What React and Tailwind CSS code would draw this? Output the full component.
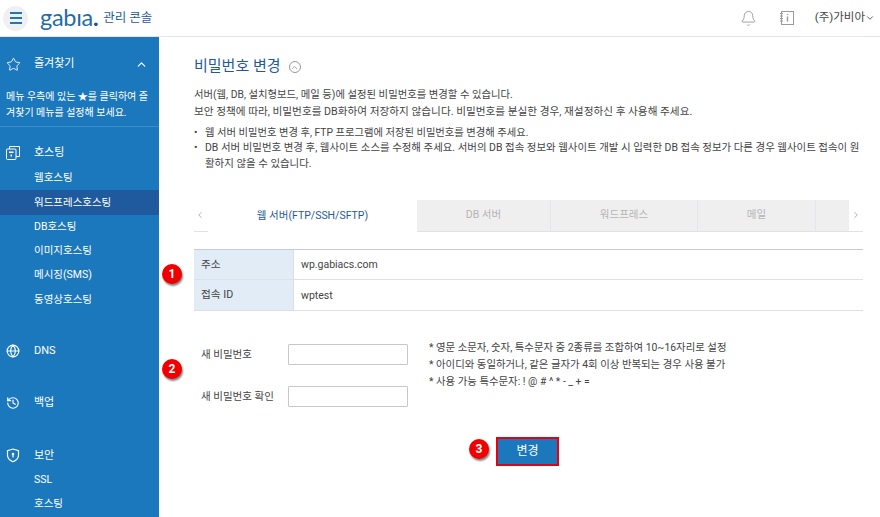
import React from "react";
import { Bell, ChevronDown, ChevronLeft, ChevronRight, ChevronUp, Globe, History, Star } from "lucide-react";

const hostingLinks = ["웹호스팅", "워드프레스호스팅", "DB호스팅", "이미지호스팅", "메시징(SMS)", "동영상호스팅"];

const HostingIcon = () => (
  <svg width="14" height="14" viewBox="0 0 14 14" fill="none" stroke="currentColor" strokeWidth="1">
    <rect x="0.5" y="3" width="9.5" height="10.5" rx="1" />
    <path d="M3.5 3V0.5h10v10H10" />
    <rect x="3" y="5.5" width="4.5" height="1.5" fill="currentColor" stroke="none" />
    <rect x="4.5" y="8.5" width="1.5" height="2" fill="currentColor" stroke="none" />
  </svg>
);

const ShieldIcon = () => (
  <svg width="14" height="15" viewBox="0 0 14 15" fill="none" stroke="currentColor" strokeWidth="1.2">
    <path d="M7 1l5.5 1.6v4.6c0 3-2.4 5.2-5.5 6.6-3.1-1.4-5.5-3.6-5.5-6.6V2.6z" />
    <circle cx="7" cy="6" r="1.3" fill="currentColor" stroke="none" />
    <rect x="6.4" y="6.5" width="1.2" height="3" fill="currentColor" stroke="none" />
  </svg>
);

const NoteIcon = () => (
  <svg width="16" height="16" viewBox="0 0 16 16" fill="none" stroke="#9a9a9a" strokeWidth="1">
    <rect x="2.5" y="1.5" width="12" height="13" />
    <path d="M1 3.5h3M1 6h3M1 8.5h3M1 11h3" />
    <path d="M8.5 4v1M8.5 6.5v5" strokeWidth="1.4" />
  </svg>
);

const Badge = ({ className, children }) => (
  <div
    className={`absolute flex h-[20px] w-[20px] items-center justify-center rounded-full bg-[#f00000] text-[12px] font-bold text-white shadow-[1px_2px_2px_rgba(0,0,0,0.5)] ${className}`}
  >
    {children}
  </div>
);

const Sidebar = () => (
  <aside className="h-full w-[159px] shrink-0 overflow-hidden bg-[#1c78bc] text-[11px] text-white">
    <div className="flex h-[52px] items-center pt-[3px]">
      <Star size={15} strokeWidth={1.4} className="ml-[6px]" />
      <span className="ml-[13px]">즐겨찾기</span>
      <ChevronUp size={13} className="ml-auto mr-[11px]" />
    </div>
    <p className="h-[37px] px-[6px] text-[10px] leading-[16px]">
      메뉴 우측에 있는 ★를 클릭하여 즐겨찾기 메뉴를 설정해 보세요.
    </p>
    <div className="border-t border-[#3d8cc6] pt-[14px]">
      <div className="flex h-[25px] items-center pb-[1px]">
        <span className="ml-[6px] w-[28px]"><HostingIcon /></span>
        <span>호스팅</span>
      </div>
      {hostingLinks.map((link) => (
        <div
          key={link}
          className={`flex h-[24.3px] items-center pl-[34px] text-[10.5px] ${link === "워드프레스호스팅" ? "bg-[#1f5a9f]" : ""}`}
        >
          {link}
        </div>
      ))}
    </div>
    <div className="mt-[27px] flex h-[24px] items-center">
      <Globe size={14} className="ml-[6px] mr-[14px]" />
      <span>DNS</span>
    </div>
    <div className="mt-[28px] flex h-[24px] items-center">
      <History size={14} className="ml-[6px] mr-[14px]" />
      <span>백업</span>
    </div>
    <div className="mt-[29px] flex h-[24px] items-center">
      <span className="ml-[6px] w-[28px]"><ShieldIcon /></span>
      <span>보안</span>
    </div>
    <div className="flex h-[24.3px] items-center pl-[34px] text-[10.5px]">SSL</div>
    <div className="flex h-[24.3px] items-center pl-[34px] text-[10.5px]">호스팅</div>
  </aside>
);

const Tabs = () => (
  <div className="mt-[28.5px] flex h-[32px] text-[10.5px]">
    <div className="flex w-[14px] items-center border-b border-[#e2e2e2] text-[#9aa5b0]">
      <ChevronLeft size={10} className="ml-px" />
    </div>
    <div className="flex w-[209px] items-center justify-center text-[#1f5a9f]">웹 서버(FTP/SSH/SFTP)</div>
    <div className="flex flex-1 border-b border-[#e2e2e2] bg-[#efefef] text-[#b5b5b5]">
      <div className="flex w-[134px] items-center justify-center border-r border-[#e4e6ee]">DB 서버</div>
      <div className="flex w-[147px] items-center justify-center border-r border-[#e4e6ee]">워드프레스</div>
      <div className="flex w-[118px] items-center justify-center border-r border-[#e4e6ee]">메일</div>
      <div className="flex-1" />
    </div>
    <div className="flex w-[14px] items-center justify-end border-b border-[#e2e2e2] text-[#9aa5b0]">
      <ChevronRight size={10} className="mr-[2px]" />
    </div>
  </div>
);

const InfoTable = () => (
  <div className="mt-[17px] border-t border-[#c5ccd2] text-[10.7px] text-[#444]">
    <div className="flex h-[30px] border-b border-[#e0e0e0]">
      <div className="flex w-[100px] items-center border-r border-[#d8dfe6] bg-[#e1ecf6] pl-[7px] pt-[2px]">주소</div>
      <div className="flex items-center pl-[7px] pt-[2px] text-[10.5px]">wp.gabiacs.com</div>
    </div>
    <div className="flex h-[31px] border-b border-[#e0e0e0]">
      <div className="flex w-[100px] items-center border-r border-[#d8dfe6] bg-[#e1ecf6] pl-[7px] pt-[2px]">접속 ID</div>
      <div className="flex items-center pl-[7px] pt-[2px] text-[10.5px]">wptest</div>
    </div>
  </div>
);

const PasswordForm = () => (
  <div className="mt-[33px] flex text-[#444]">
    <div className="w-[235px] pl-[7px] text-[10.5px]">
      <div className="flex h-[22px] items-center">
        <label className="w-[87px]">새 비밀번호</label>
        <input className="h-[21px] w-[120px] rounded-[1px] border border-[#c8c8c8] bg-white" />
      </div>
      <div className="mt-[20px] flex h-[22px] items-center">
        <label className="w-[87px]">새 비밀번호 확인</label>
        <input className="h-[21px] w-[120px] rounded-[1px] border border-[#c8c8c8] bg-white" />
      </div>
    </div>
    <ul className="-mt-[5px] text-[10.4px] leading-[17px]">
      <li>* 영문 소문자, 숫자, 특수문자 중 2종류를 조합하여 10~16자리로 설정</li>
      <li>* 아이디와 동일하거나, 같은 글자가 4회 이상 반복되는 경우 사용 불가</li>
      <li>* 사용 가능 특수문자: ! @ # ^ * - _ + =</li>
    </ul>
  </div>
);

export default function App() {
  return (
    <div className="flex h-[517px] w-[880px] flex-col overflow-hidden bg-white font-['Roboto','Noto_Sans_CJK_KR',sans-serif]">
      <header className="flex h-[37px] shrink-0 items-center border-b border-[#e6e6e6]">
        <div className="ml-[3px] flex h-[25px] w-[25px] flex-col items-center justify-center gap-[3px] rounded-full bg-[#f0f0f0]">
          <span className="h-[2px] w-[12px] bg-[#1c78bc]" />
          <span className="h-[2px] w-[12px] bg-[#1c78bc]" />
          <span className="h-[2px] w-[12px] bg-[#1c78bc]" />
        </div>
        <span className="ml-[12px] font-['Lato',sans-serif] text-[23.5px] font-normal leading-none tracking-[-0.3px] text-[#1f6ca8]">
          gabıa<b className="text-[#1f4f86]">.</b>
        </span>
        <span className="ml-[5px] text-[12.5px] text-[#1f5a9f]">관리 콘솔</span>
        <Bell size={17} strokeWidth={1.3} className="ml-auto text-[#9a9a9a]" />
        <span className="ml-[22px]"><NoteIcon /></span>
        <span className="ml-[20px] text-[11.5px] text-[#444]">(주)가비아</span>
        <ChevronDown size={10} className="mr-[5px] text-[#444]" />
      </header>
      <div className="flex min-h-0 flex-1">
        <Sidebar />
        <main className="relative flex-1 pl-[35px] pr-[17px] pt-[18px]">
          <div className="flex items-center">
            <h1 className="text-[15px] font-normal text-[#1f5a9f]">비밀번호 변경</h1>
            <span className="ml-[8px] mt-[2px] flex h-[12px] w-[12px] items-center justify-center rounded-full border border-[#999] text-[#888]">
              <ChevronUp size={9} />
            </span>
          </div>
          <div className="mt-[8px] text-[10.65px] leading-[17px] text-[#444]">
            <p className="text-[10.35px]">서버(웹, DB, 설치형보드, 메일 등)에 설정된 비밀번호를 변경할 수 있습니다.</p>
            <p>보안 정책에 따라, 비밀번호를 DB화하여 저장하지 않습니다. 비밀번호를 분실한 경우, 재설정하신 후 사용해 주세요.</p>
          </div>
          <ul className="mt-[5px] text-[10.3px] leading-[15.5px] text-[#444]">
            <li className="flex">
              <span className="w-[11px] shrink-0">•</span>
              <span>웹 서버 비밀번호 변경 후, FTP 프로그램에 저장된 비밀번호를 변경해 주세요.</span>
            </li>
            <li className="flex text-[10.45px]">
              <span className="w-[11px] shrink-0">•</span>
              <span>
                DB 서버 비밀번호 변경 후, 웹사이트 소스를 수정해 주세요. 서버의 DB 접속 정보와 웹사이트 개발 시 입력한 DB 접속 정보가 다른 경우 웹사이트 접속이 원활하지 않을 수 있습니다.
              </span>
            </li>
          </ul>
          <Tabs />
          <InfoTable />
          <PasswordForm />
          <button className="ml-[302px] mt-[29px] flex h-[29px] w-[63px] items-center justify-center border-2 border-[#e8000f] bg-[#1c78bc] text-[12px] text-white">
            변경
          </button>
          <Badge className="left-[3px] top-[227px]">1</Badge>
          <Badge className="left-[3px] top-[322px]">2</Badge>
          <Badge className="left-[310px] top-[402px]">3</Badge>
        </main>
      </div>
    </div>
  );
}
